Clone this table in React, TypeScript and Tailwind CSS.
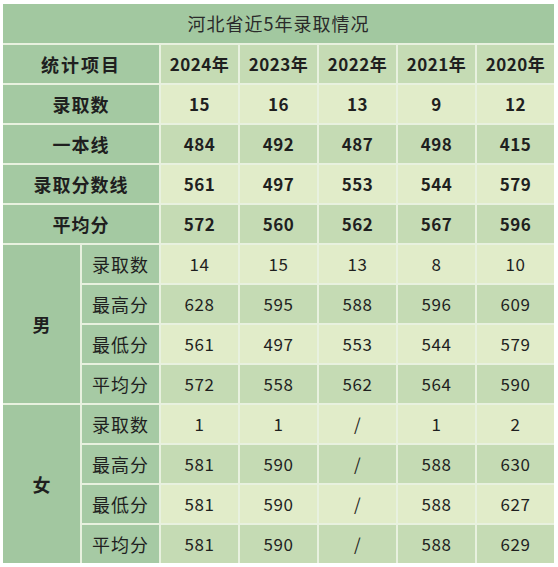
import React from 'react'

const years = ['2024年', '2023年', '2022年', '2021年', '2020年']

const topRows: { label: string; values: string[] }[] = [
    { label: '录取数', values: ['15', '16', '13', '9', '12'] },
    { label: '一本线', values: ['484', '492', '487', '498', '415'] },
    { label: '录取分数线', values: ['561', '497', '553', '544', '579'] },
    { label: '平均分', values: ['572', '560', '562', '567', '596'] },
]

const groups: { name: string; rows: { label: string; values: string[] }[] }[] = [
    {
        name: '男',
        rows: [
            { label: '录取数', values: ['14', '15', '13', '8', '10'] },
            { label: '最高分', values: ['628', '595', '588', '596', '609'] },
            { label: '最低分', values: ['561', '497', '553', '544', '579'] },
            { label: '平均分', values: ['572', '558', '562', '564', '590'] },
        ],
    },
    {
        name: '女',
        rows: [
            { label: '录取数', values: ['1', '1', '/', '1', '2'] },
            { label: '最高分', values: ['581', '590', '/', '588', '630'] },
            { label: '最低分', values: ['581', '590', '/', '588', '627'] },
            { label: '平均分', values: ['581', '590', '/', '588', '629'] },
        ],
    },
]

const LIGHT = 'bg-[#e1ecc9]'
const MID = 'bg-[#c5dbb4]'
const cell = 'flex items-center justify-center'

export default function App() {
    return (
        <div className="min-h-screen bg-white pt-[4px] pl-[3px] text-[17px] text-[#1f1f1f] [font-family:'Noto_Sans_CJK_SC','Noto_Sans',sans-serif]">
            <div className="grid w-[551px] grid-cols-[repeat(7,77px)] grid-rows-[39px_repeat(13,38px)] gap-[2px] bg-[#e8f1df]">
                {/* 标题 */}
                <div className={`${cell} col-span-7 bg-[#a2c8a0] text-[18px] tracking-[1px] text-[#2a2a2a]`}>
                    河北省近5年录取情况
                </div>

                {/* 表头 */}
                <div className={`${cell} col-span-2 bg-[#a4c9a2] text-[18px] font-bold tracking-[2px]`}>统计项目</div>
                {years.map((y) => (
                    <div key={y} className={`${cell} ${MID} font-bold tracking-[0.5px]`}>{y}</div>
                ))}

                {topRows.map((r, i) => (
                    <React.Fragment key={r.label}>
                        <div className={`${cell} col-span-2 bg-[#a4c9a2] text-[18px] font-bold tracking-[1px]`}>{r.label}</div>
                        {r.values.map((v, j) => (
                            <div key={j} className={`${cell} ${i % 2 === 0 ? LIGHT : MID} font-bold tracking-[0.5px]`}>{v}</div>
                        ))}
                    </React.Fragment>
                ))}

                {groups.map((g, gi) => (
                    <React.Fragment key={g.name}>
                        <div
                            className={`${cell} row-span-4 bg-[#a2c7a0] text-[18px] font-bold`}
                            style={{ gridRowStart: 7 + gi * 4, gridColumnStart: 1 }}
                        >
                            {g.name}
                        </div>
                        {g.rows.map((r, i) => (
                            <React.Fragment key={r.label}>
                                <div className={`${cell} bg-[#a6caa4] text-[18px] tracking-[1px]`}>{r.label}</div>
                                {r.values.map((v, j) => (
                                    <div key={j} className={`${cell} ${i % 2 === 0 ? LIGHT : MID} tracking-[0.5px]`}>{v}</div>
                                ))}
                            </React.Fragment>
                        ))}
                    </React.Fragment>
                ))}
            </div>
        </div>
    )
}
